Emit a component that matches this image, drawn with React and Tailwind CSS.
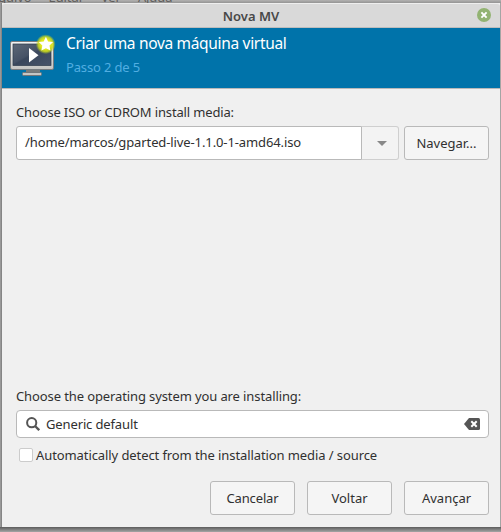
import React from "react";

const buttonBase =
  "flex h-[34px] items-center justify-center rounded-[3px] border border-[#b9b9b9] bg-[#f5f5f5] text-[#303030]";

function MonitorIcon() {
  return (
    <svg width="48" height="44" viewBox="0 0 48 44" className="block">
      <defs>
        <linearGradient id="screen" x1="0" y1="0" x2="1" y2="1">
          <stop offset="0" stopColor="#5d6877" />
          <stop offset="0.45" stopColor="#465266" />
          <stop offset="0.5" stopColor="#3a475c" />
          <stop offset="1" stopColor="#46536a" />
        </linearGradient>
        <linearGradient id="bezel" x1="0" y1="0" x2="0" y2="1">
          <stop offset="0" stopColor="#f4f4f3" />
          <stop offset="1" stopColor="#c5c5c3" />
        </linearGradient>
        <radialGradient id="glow">
          <stop offset="0.5" stopColor="#e4ea1e" />
          <stop offset="0.75" stopColor="#cddb1c" stopOpacity="0.85" />
          <stop offset="1" stopColor="#a8c42c" stopOpacity="0" />
        </radialGradient>
      </defs>
      <path d="M18 35h14v4H18z" fill="#777a7b" />
      <rect x="14.5" y="38.500" width="19" height="3" rx="1" fill="#c4c5c4" stroke="#717679" />
      <rect x="2.500" y="7.500" width="43" height="28" rx="1.500" fill="url(#bezel)" stroke="#777c80" />
      <rect x="5" y="10" width="38" height="21.500" fill="url(#screen)" stroke="#2d394a" strokeWidth="0.7" />
      <path d="M21 14l9.500 7.200L21 28.500z" fill="#fff" />
      <circle cx="37.700" cy="10.200" r="10" fill="url(#glow)" />
      <path d="M37.900 2.800l2.200 4.600 5 .7-3.600 3.500.9 5-4.500-2.400-4.500 2.400.9-5-3.600-3.500 5-.7z" fill="#fff" />
    </svg>
  );
}

export default function App() {
  return (
    <div className="relative flex h-[532px] w-[501px] flex-col overflow-hidden bg-[#a5a5a4] pt-[3px] pr-px pb-[5px] pl-[2px] font-['Noto_Sans','Open_Sans',sans-serif] text-[13px] whitespace-nowrap text-[#303030]">
      <div className="absolute inset-x-0 top-0 h-[3px] overflow-hidden bg-gradient-to-b from-[#b3b2b1] to-[#949494] text-[#5f5d5b]">
        <div className="-mt-[12px] -ml-[15px] flex gap-[17px] leading-[18px] tracking-[-0.1px]">
          <span>Arquivo</span>
          <span>Editar</span>
          <span>Ver</span>
          <span>Ajuda</span>
        </div>
      </div>
      <div className="absolute top-[3px] left-0 h-[524px] w-[2px] bg-gradient-to-r from-[#a3a3a3] to-[#7c7c7c]" />
      <div className="absolute inset-x-0 bottom-0 h-[5px] bg-gradient-to-b from-[#5c5c5c] to-[#a6a6a6]" />

      <div className="relative flex min-h-0 flex-1 flex-col bg-[#f0f0f0]">
        <header className="relative flex h-[25px] shrink-0 items-center justify-center rounded-t-[3px] border-t border-b border-t-[#eeeeee] border-b-[#bdbdbd] bg-[#d9d9d9]">
          <h1 className="mt-[2px] text-[13px] leading-none font-semibold text-[#484848]">Nova MV</h1>
          <svg className="absolute top-[4px] right-[9px]" width="14" height="14" viewBox="0 0 14 14">
            <circle cx="7" cy="7" r="7" fill="#92b372" />
            <path d="M4.4 4.4l5.2 5.2M9.6 4.4L4.4 9.6" stroke="#fff" strokeWidth="1.9" />
          </svg>
        </header>

        <section className="flex h-[61px] shrink-0 border-b border-[#b9b9b9] bg-[#0073aa] pl-[6px]">
          <div className="pt-[6px]">
            <MonitorIcon />
          </div>
          <div className="flex flex-col pt-[4px] pl-[10px]">
            <h2 className="text-[15.5px] leading-[23px] tracking-[-0.32px] text-white">Criar uma nova máquina virtual</h2>
            <p className="pt-[3px] text-[13px] leading-[18px] tracking-[-0.15px] text-[#51aee2]">Passo 2 de 5</p>
          </div>
        </section>

        <main className="flex flex-1 flex-col pt-[14px] pr-[11px] pl-[14px]">
          <label className="leading-[18px] tracking-[-0.15px]">Choose ISO or CDROM install media:</label>
          <div className="mt-[5px] flex gap-[5px]">
            <div className="flex h-[34px] w-[383px]">
              <div className="flex w-[346px] items-center rounded-l-[3px] border border-[#b9b9b9] bg-white pl-[8px] tracking-[-0.11px]">
                /home/marcos/gparted-live-1.1.0-1-amd64.iso
              </div>
              <div className="flex flex-1 items-center justify-center rounded-r-[3px] border border-l-0 border-[#cfcfcf] bg-[#f3f3f3]">
                <svg width="10" height="5" viewBox="0 0 10 5" className="ml-[3px]">
                  <path d="M0 0h10L5 5z" fill="#888" />
                </svg>
              </div>
            </div>
            <div className={buttonBase + " w-[85px] pt-[2px]"}>Navegar...</div>
          </div>

          <div className="flex-1" />

          <label className="leading-[18px] tracking-[-0.11px]">Choose the operating system you are installing:</label>
          <div className="mt-[5px] flex h-[28px] w-[473px] items-center rounded-[4px] border border-[#b9b9b9] bg-white pr-[8px] pl-[9px]">
            <svg width="14" height="14" viewBox="0 0 14 14" fill="none" stroke="#555" className="mr-[6px]">
              <circle cx="5.7" cy="5.7" r="4.6" strokeWidth="2" />
              <path d="M9 9l4.2 4.2" strokeWidth="2.3" />
            </svg>
            <span className="pt-px tracking-[-0.13px]">Generic default</span>
            <svg width="16" height="12" viewBox="0 0 16 12" className="ml-auto">
              <path d="M5 0h9.5A1.5 1.5 0 0 1 16 1.5v9a1.5 1.5 0 0 1-1.5 1.5H5L0 6z" fill="#555" />
              <path d="M7.3 3.3l5.4 5.4M12.7 3.3L7.3 8.7" stroke="#fff" strokeWidth="2" />
            </svg>
          </div>
          <div className="mt-[8px] flex h-[18px] items-center">
            <span className="ml-[3px] h-[14px] w-[14px] rounded-[2px] border border-[#cccccc] bg-white" />
            <span className="ml-[3px] pt-px tracking-[-0.09px]">Automatically detect from the installation media / source</span>
          </div>
          <div className="mt-[17px] mb-[12px] flex w-[473px] justify-end gap-[12px]">
            <div className={buttonBase + " w-[85px] pt-px tracking-[-0.15px]"}>Cancelar</div>
            <div className={buttonBase + " w-[85px] pt-px"}>Voltar</div>
            <div className={buttonBase + " w-[85px] pt-px"}>Avançar</div>
          </div>
        </main>
      </div>
    </div>
  );
}
